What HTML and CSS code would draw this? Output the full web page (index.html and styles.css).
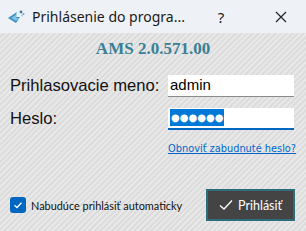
FILE: index.html
```html
<!DOCTYPE html>
<html>
<head>
<meta charset="utf-8">
<link rel="stylesheet" href="styles.css">
</head>
<body>
<div class="window">
  <div class="titlebar">
    <svg class="app-icon" width="18" height="18" viewBox="0 0 18 18">
      <path d="M1 10 L10 4 L8 9 L13 9 L9 15 Z" fill="#3a8fc0"/>
      <path d="M4 10 L10 6 L9 10 L12 10 L9 13 Z" fill="#7fc2e6"/>
      <circle cx="14" cy="4" r="1.4" fill="#3a7aa0"/>
      <circle cx="16.5" cy="6" r="1" fill="#6aa5c8"/>
      <circle cx="15" cy="7.5" r="0.9" fill="#9ac6e0"/>
    </svg>
    <span class="title">Prihlásenie do progra...</span>
    <span class="tb-btn help">?</span>
    <span class="tb-btn close">
      <svg width="12" height="12" viewBox="0 0 12 12"><path d="M1 1 L11 11 M11 1 L1 11" stroke="#222" stroke-width="1.2"/></svg>
    </span>
  </div>
  <div class="content">
    <div class="version">AMS 2.0.571.00</div>
    <div class="form">
      <label class="label">Prihlasovacie meno:</label>
      <div class="input user">admin</div>
      <label class="label">Heslo:</label>
      <div class="input pass"><span class="sel">●●●●●●</span></div>
    </div>
    <div class="link-row"><a class="link">Obnoviť zabudnuté heslo?</a></div>
    <div class="bottom">
      <div class="check-row">
        <span class="checkbox">
          <svg width="16" height="16" viewBox="0 0 16 16"><path d="M4.5 8.2 L7 10.5 L11.5 5.8" fill="none" stroke="#fff" stroke-width="1.3"/></svg>
        </span>
        <span class="check-label">Nabudúce prihlásiť automaticky</span>
      </div>
      <div class="login-btn">
        <svg width="14" height="12" viewBox="0 0 14 12"><path d="M1 6.5 L5 10 L13 1.5" fill="none" stroke="#fff" stroke-width="1.3"/></svg>
        <span>Prihlásiť</span>
      </div>
    </div>
  </div>
</div>
</body>
</html>
```
FILE: styles.css
```css
html, body {
  margin: 0;
  padding: 0;
}
body {
  width: 306px;
  height: 231px;
  overflow: hidden;
}
.window {
  width: 306px;
  height: 231px;
  display: flex;
  flex-direction: column;
}
.titlebar {
  height: 33px;
  background: #eef2f7;
  display: flex;
  align-items: center;
  padding-left: 7px;
  font-family: "Noto Sans", sans-serif;
  font-size: 14px;
  color: #1a1a1a;
}
.app-icon {
  flex: none;
}
.title {
  margin-left: 7px;
}
.tb-btn {
  display: flex;
  align-items: center;
  justify-content: center;
  height: 33px;
}
.help {
  margin-left: auto;
  width: 46px;
  font-size: 15px;
}
.close {
  width: 50px;
  margin-left: 12px;
}
.content {
  flex: 1;
  background: repeating-linear-gradient(135deg, #e8e8e8 0px, #e8e8e8 2px, #dcdcdc 2px, #dcdcdc 4px);
  font-family: "Liberation Sans", sans-serif;
  padding: 6px 0 0 0;
}
.version {
  text-align: center;
  font-family: "Liberation Serif", serif;
  font-weight: bold;
  font-size: 17px;
  line-height: 20px;
  color: #3a7f96;
}
.form {
  display: grid;
  grid-template-columns: 158px 126px;
  grid-auto-rows: 22px;
  row-gap: 11px;
  align-items: center;
  padding-left: 10px;
  margin-top: 16px;
}
.label {
  font-size: 16.6px;
  color: #111;
}
.input {
  height: 22px;
  box-sizing: border-box;
  background: #fff;
  font-size: 15px;
  line-height: 20px;
  padding-left: 2px;
  color: #000;
}
.user {
  border-bottom: 1px solid #8a8a8a;
}
.pass {
  border-bottom: 2px solid #0067c0;
  padding-top: 1px;
}
.sel {
  display: inline-block;
  background: #0078d7;
  color: #fff;
  font-family: "DejaVu Sans", sans-serif;
  font-size: 10px;
  line-height: 17px;
  height: 17px;
  letter-spacing: 0px;
  vertical-align: top;
  padding: 0 1px;
}
.link-row {
  padding-left: 168px;
  margin-top: 8px;
}
.link {
  font-family: "DejaVu Sans", sans-serif;
  font-size: 9.8px;
  color: #0066cc;
  text-decoration: underline;
}
.bottom {
  display: flex;
  align-items: center;
  justify-content: space-between;
  padding: 0 11px 0 10px;
  margin-top: 33px;
}
.check-row {
  display: flex;
  align-items: center;
}
.checkbox {
  width: 16px;
  height: 16px;
  border-radius: 3px;
  background: #0067c0;
  display: flex;
}
.check-label {
  margin-left: 5px;
  font-family: "Lato", sans-serif;
  font-size: 10.9px;
  color: #111;
}
.login-btn {
  width: 89px;
  height: 32px;
  box-sizing: border-box;
  border: 2px solid #2d6d78;
  background: #444444;
  color: #fff;
  display: flex;
  align-items: center;
  justify-content: center;
  gap: 5px;
  font-family: "Lato", sans-serif;
  font-size: 12.5px;
}
```
